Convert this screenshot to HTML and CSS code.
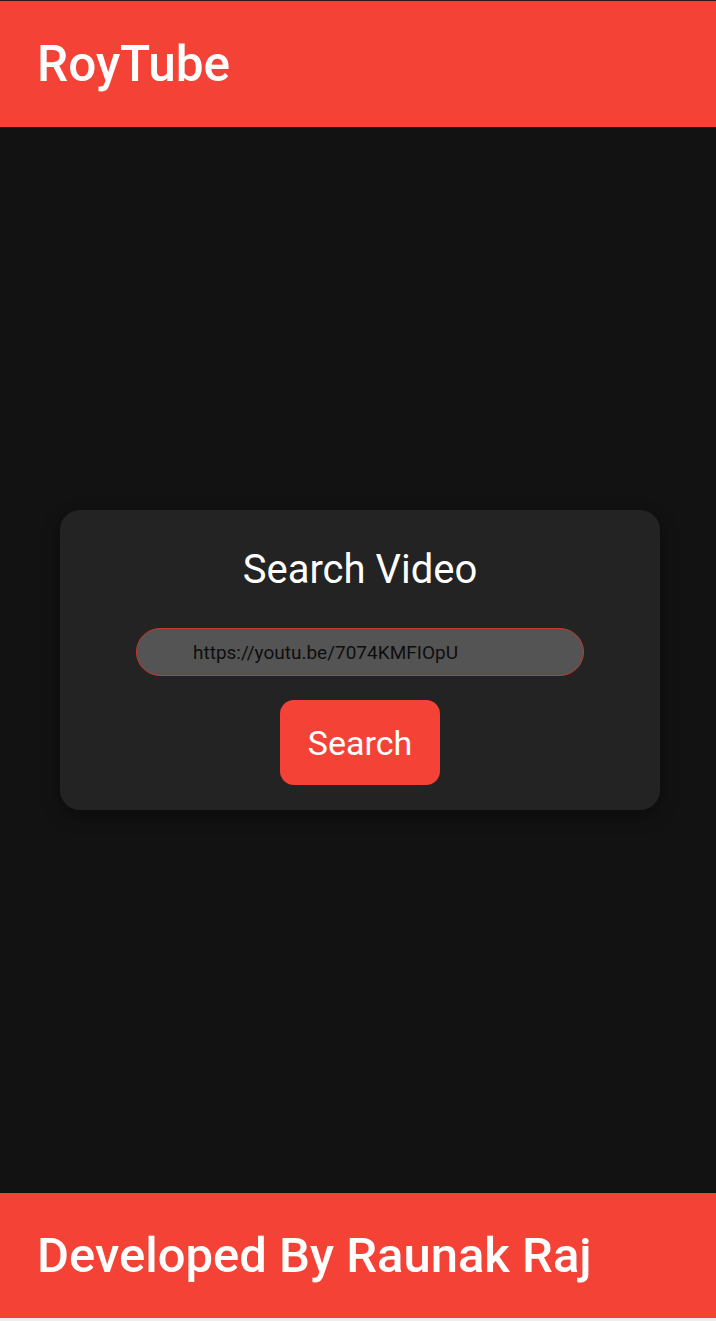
FILE: index.html
```html
<!DOCTYPE html>
<html>
<head>
<meta charset="utf-8">
<link rel="stylesheet" href="styles.css">
</head>
<body>
<div class="app">
  <header class="topbar"><h1 class="brand">RoyTube</h1></header>
  <main class="main">
    <div class="card">
      <h2 class="card-title">Search Video</h2>
      <div class="url-input">https://youtu.be/7074KMFIOpU</div>
      <button class="search-btn">Search</button>
    </div>
  </main>
  <footer class="footer"><p class="credit">Developed By Raunak Raj</p></footer>
  <div class="navstrip"></div>
</div>
</body>
</html>
```
FILE: styles.css
```css
* { box-sizing: border-box; }
html, body { margin: 0; padding: 0; }
body { background: #121212; font-family: Roboto, "Noto Sans", sans-serif; }
.app { display: flex; flex-direction: column; height: 1321px; }
.topbar {
  background: #f44336;
  border-top: 1px solid #2a1a19;
  height: 127px;
  display: flex;
  align-items: center;
  padding-left: 37px;
}
.brand { margin: 0; color: #fff; font-size: 49.5px; font-weight: 500; }
.main { flex: 1; display: flex; align-items: center; justify-content: center; padding-left: 4px; }
.card {
  width: 600px;
  height: 300px;
  background: #232323;
  border-radius: 20px;
  box-shadow: 0 6px 18px rgba(0,0,0,0.35);
  display: flex;
  flex-direction: column;
  align-items: center;
  padding-top: 36px;
}
.card-title { margin: 0; color: #fff; font-size: 40px; font-weight: 400; line-height: 48px; }
.url-input {
  margin-top: 34px;
  width: 448px;
  height: 48px;
  background: #545454;
  border: 1px solid #c8352c;
  border-radius: 24px;
  display: flex;
  align-items: center;
  padding-left: 56px;
  color: #0e0e0e;
  font-size: 19px;
}
.search-btn {
  margin-top: 24px;
  width: 160px;
  height: 85px;
  background: #f44336;
  border: none;
  border-radius: 14px;
  color: #fff;
  font-family: Roboto, sans-serif;
  font-size: 34px;
  font-weight: 400;
}
.footer {
  background: #f44336;
  height: 125px;
  display: flex;
  align-items: center;
  padding-left: 37px;
}
.credit { margin: 0; color: #fff; font-size: 49px; font-weight: 500; }
.navstrip { height: 3px; background: #eeeeee; }
```
